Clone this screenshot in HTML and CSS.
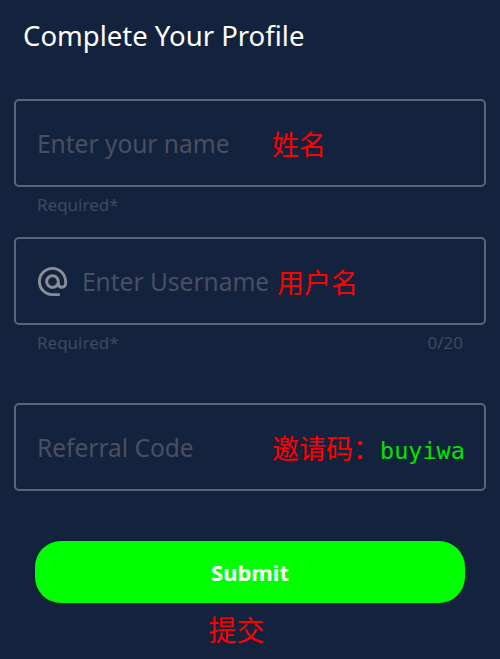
FILE: index.html
```html
<!DOCTYPE html>
<html lang="zh-CN">
<head>
    <meta charset="UTF-8">
    <meta name="viewport" content="width=device-width, initial-scale=1.0">
    <title>Complete Your Profile</title>
    <link rel="stylesheet" href="styles.css">
</head>
<body>
    <div class="page">
        <h1 class="title">Complete Your Profile</h1>

        <div class="field field-name">
            <span class="ph ph-wide">Enter your name</span>
            <span class="note">姓名</span>
        </div>
        <div class="hint">
            <span>Required*</span>
        </div>

        <div class="field field-user">
            <svg class="at-icon" viewBox="0 0 24 24" width="35" height="35" aria-hidden="true">
                <path fill="currentColor" d="M12 2C6.48 2 2 6.48 2 12s4.48 10 10 10h5v-2h-5c-4.34 0-8-3.660-8-8s3.66-8 8-8 8 3.66 8 8v1.43c0 .79-.71 1.570-1.5 1.57s-1.5-.78-1.5-1.57V12c0-2.76-2.24-5-5-5s-5 2.24-5 5 2.24 5 5 5c1.38 0 2.64-.56 3.54-1.47.65.89 1.77 1.47 2.96 1.47 1.97 0 3.5-1.6 3.5-3.57V12c0-5.52-4.48-10-10-10zm0 13c-1.66 0-3-1.34-3-3s1.34-3 3-3 3 1.34 3 3-1.34 3-3 3z"/>
            </svg>
            <span class="ph">Enter Username</span>
            <span class="note">用户名</span>
        </div>
        <div class="hint">
            <span>Required*</span>
            <span>0/20</span>
        </div>

        <div class="field field-code">
            <span class="ph ph-wide">Referral Code</span>
            <span class="note">邀请码：<span class="code">buyiwa</span></span>
        </div>

        <button class="submit" type="button">Submit</button>
        <div class="submit-note">提交</div>
    </div>
</body>
</html>
```

FILE: styles.css
```css
body {
    margin: 0;
    background-color: #14233d;
    font-family: "Noto Sans", "Open Sans", sans-serif;
}

.page {
    padding: 0 14px;
}

.title {
    margin: 0;
    padding: 18px 9px 0;
    font-size: 27.5px;
    line-height: 35px;
    font-weight: 400;
    color: #ffffff;
}

.field {
    box-sizing: border-box;
    height: 88px;
    display: flex;
    align-items: center;
    padding: 0 18px 0 21px;
    border: 2px solid #5e6477;
    border-radius: 5px;
}

.field-name {
    margin-top: 46px;
}

.field-user {
    margin-top: 21px;
}

.field-code {
    margin-top: 49px;
}

.ph {
    font-size: 24.5px;
    color: #4a4f60;
    white-space: nowrap;
}

.ph-wide {
    width: 235px;
    flex-shrink: 0;
}

.at-icon {
    color: #8a8d97;
    margin-left: -2px;
    margin-right: 12px;
}

.note {
    font-family: "Noto Sans CJK SC", sans-serif;
    font-size: 27px;
    color: #ff0000;
    white-space: nowrap;
}

.field-user .note {
    margin-left: 8px;
}

.code {
    font-family: "DejaVu Sans Mono", "Liberation Mono", monospace;
    font-size: 23.5px;
    color: #00e600;
}

.hint {
    display: flex;
    justify-content: space-between;
    margin-top: 7px;
    padding: 0 23px;
    font-size: 17px;
    line-height: 22px;
    color: #3d4a60;
}

.submit {
    display: block;
    box-sizing: border-box;
    width: 430px;
    height: 62px;
    margin: 50px 0 0 21px;
    border: none;
    border-radius: 26px;
    background-color: #00ff00;
    color: #ffffff;
    font-family: "Noto Sans", sans-serif;
    font-size: 22px;
    font-weight: 700;
}

.submit-note {
    margin: 8px 27px 0 0;
    text-align: center;
    font-family: "Noto Sans CJK SC", sans-serif;
    font-size: 28px;
    line-height: 36px;
    color: #ff0000;
}
```
